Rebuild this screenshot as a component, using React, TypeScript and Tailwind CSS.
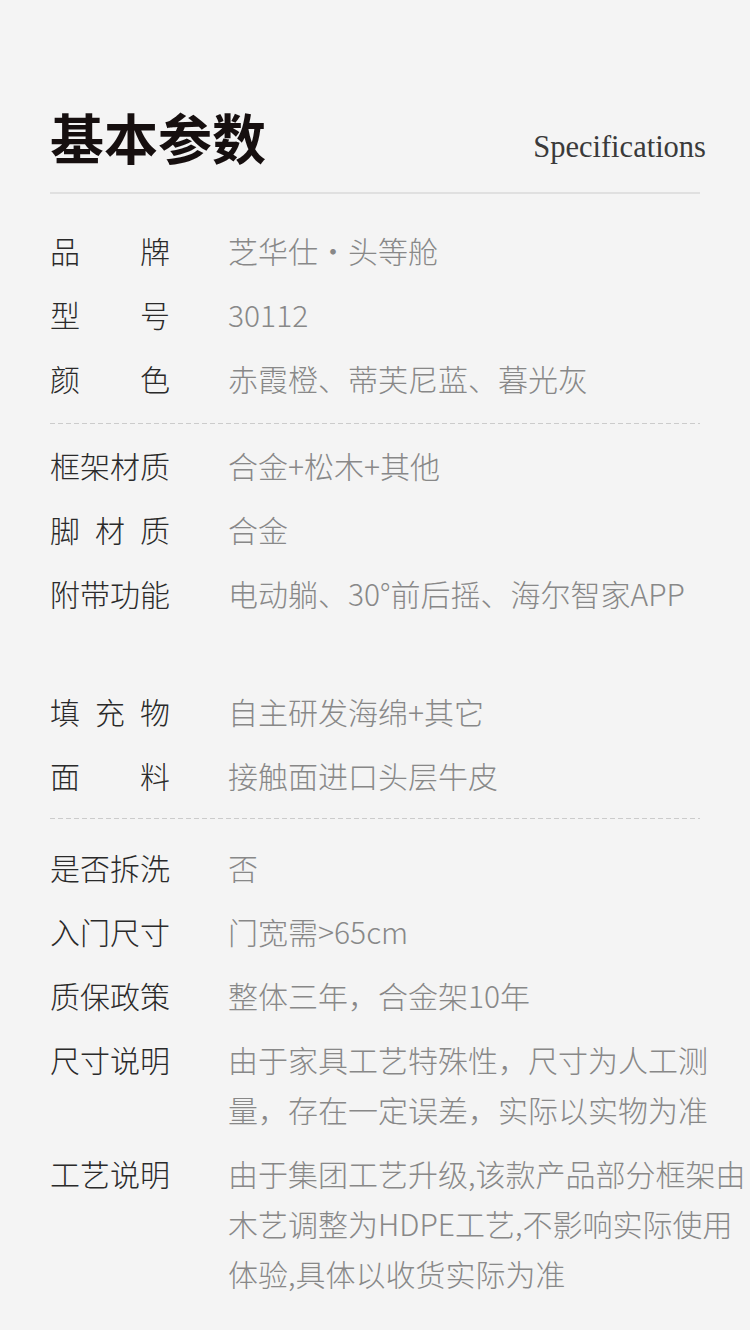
const cjk = "font-['Noto_Sans_CJK_SC','Noto_Sans',sans-serif]";

type Spec = { label: string; lines: string[] };

const groupA: Spec[] = [
  { label: "品牌", lines: ["芝华仕・头等舱"] },
  { label: "型号", lines: ["30112"] },
  { label: "颜色", lines: ["赤霞橙、蒂芙尼蓝、暮光灰"] },
];

const groupB: Spec[] = [
  { label: "框架材质", lines: ["合金+松木+其他"] },
  { label: "脚材质", lines: ["合金"] },
  { label: "附带功能", lines: ["电动躺、30°前后摇、海尔智家APP"] },
];

const groupC: Spec[] = [
  { label: "填充物", lines: ["自主研发海绵+其它"] },
  { label: "面料", lines: ["接触面进口头层牛皮"] },
];

const groupD: Spec[] = [
  { label: "是否拆洗", lines: ["否"] },
  { label: "入门尺寸", lines: ["门宽需>65cm"] },
  { label: "质保政策", lines: ["整体三年，合金架10年"] },
  { label: "尺寸说明", lines: ["由于家具工艺特殊性，尺寸为人工测", "量，存在一定误差，实际以实物为准"] },
  { label: "工艺说明", lines: ["由于集团工艺升级,该款产品部分框架由", "木艺调整为HDPE工艺,不影响实际使用", "体验,具体以收货实际为准"] },
];

function Row({ spec }: { spec: Spec }) {
  const chars = spec.label.split("");
  return (
    <div className="flex items-start">
      <div className="flex w-[120px] shrink-0 justify-between text-[30px] font-light leading-[50px] text-[#2a2a2a]">
        {chars.map((c, i) => (
          <span key={i}>{c}</span>
        ))}
      </div>
      <div className="ml-[58px] flex flex-col text-[30px] font-light leading-[50px] text-[#888888]">
        {spec.lines.map((l, i) => (
          <span key={i} className="whitespace-nowrap">
            {l}
          </span>
        ))}
      </div>
    </div>
  );
}

function Group({ items }: { items: Spec[] }) {
  return (
    <div className="flex flex-col gap-[14px]">
      {items.map((s) => (
        <Row key={s.label} spec={s} />
      ))}
    </div>
  );
}

function Dashed() {
  return (
    <div className="h-px w-full bg-[linear-gradient(to_right,#cccccc_5px,transparent_5px)] bg-[length:8px_1px] bg-repeat-x" />
  );
}

export default function App() {
  return (
    <div className={`min-h-[1330px] w-[750px] overflow-hidden bg-[#f4f4f4] ${cjk}`}>
      <div className="px-[50px] pt-[110px]">
        <div className="flex items-end justify-between">
          <h1 className="text-[54px] font-bold leading-[54px] text-[#160f0f]">基本参数</h1>
          <span className="mr-[-6px] mb-[-3px] font-['Liberation_Serif',serif] text-[30.5px] leading-[40px] text-[#3a3a3a]">
            Specifications
          </span>
        </div>
        <div className="mt-[28px] h-[2px] w-full bg-[#e0e0e0]" />

        <div className="mt-[31px]">
          <Group items={groupA} />
        </div>
        <div className="mt-[20px] mb-[16px]">
          <Dashed />
        </div>
        <Group items={groupB} />
        <div className="mt-[68px]">
          <Group items={groupC} />
        </div>
        <div className="mt-[18px] mb-[23px]">
          <Dashed />
        </div>
        <Group items={groupD} />
      </div>
    </div>
  );
}
